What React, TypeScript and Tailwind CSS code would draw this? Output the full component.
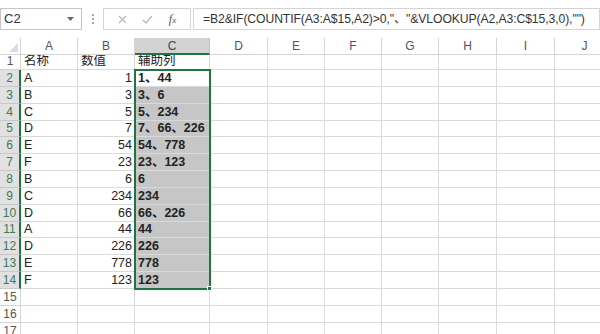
import React from 'react';

const COLS = [
  { key: 'A', w: 57 },
  { key: 'B', w: 57 },
  { key: 'C', w: 75 },
  { key: 'D', w: 58 },
  { key: 'E', w: 57 },
  { key: 'F', w: 57 },
  { key: 'G', w: 57 },
  { key: 'H', w: 58 },
  { key: 'I', w: 58 },
  { key: 'J', w: 60 },
];

type Row = { a?: string; b?: string; c?: string };

const ROWS: Row[] = [
  { a: '名称', b: '数值', c: '辅助列' },
  { a: 'A', b: '1', c: '1、44' },
  { a: 'B', b: '3', c: '3、6' },
  { a: 'C', b: '5', c: '5、234' },
  { a: 'D', b: '7', c: '7、66、226' },
  { a: 'E', b: '54', c: '54、778' },
  { a: 'F', b: '23', c: '23、123' },
  { a: 'B', b: '6', c: '6' },
  { a: 'C', b: '234', c: '234' },
  { a: 'D', b: '66', c: '66、226' },
  { a: 'A', b: '44', c: '44' },
  { a: 'D', b: '226', c: '226' },
  { a: 'E', b: '778', c: '778' },
  { a: 'F', b: '123', c: '123' },
  {},
  {},
  {},
];

const font = "font-['Liberation_Sans','Noto_Sans_CJK_SC',sans-serif]";

function Toolbar() {
  return (
    <div className="flex h-[38px] items-start bg-white pt-[8px]">
      <div className="flex h-[22px] w-[82px] items-center justify-between border border-[#c6c6c6] pl-[3px] pr-[7px]">
        <span className="text-[13px] text-[#333]">C2</span>
        <svg width="7" height="4" viewBox="0 0 7 4">
          <path d="M0 0h7L3.5 4z" fill="#666" />
        </svg>
      </div>
      <div className="flex h-[22px] w-[21px] flex-col items-center justify-center gap-[2px]">
        <span className="h-[2px] w-[2px] bg-[#aaa]" />
        <span className="h-[2px] w-[2px] bg-[#aaa]" />
        <span className="h-[2px] w-[2px] bg-[#aaa]" />
      </div>
      <div className="flex h-[22px] w-[88px] items-center justify-around border border-[#d4d4d4] px-[6px]">
        <svg width="9" height="9" viewBox="0 0 9 9">
          <path d="M1 1l7 7M8 1L1 8" stroke="#b8b8b8" strokeWidth="1.2" />
        </svg>
        <svg width="11" height="9" viewBox="0 0 11 9">
          <path d="M1 5l3 3 6-7" stroke="#b8b8b8" strokeWidth="1.3" fill="none" />
        </svg>
        <span className="font-['Liberation_Serif',serif] text-[12px] italic text-[#555]">
          f<span className="text-[9px]">x</span>
        </span>
      </div>
      <div className="ml-[2px] flex h-[22px] flex-1 items-center border border-[#d4d4d4] pl-[9px]">
        <span className="whitespace-nowrap text-[12.2px] tracking-[-0.1px] text-[#333]">
          =B2&amp;IF(COUNTIF(A3:A$15,A2)&gt;0,"、"&amp;VLOOKUP(A2,A3:C$15,3,0),"")
        </span>
      </div>
    </div>
  );
}

function ColumnHeaders() {
  return (
    <div className="flex h-[17px]">
      <div className="relative w-[21px] shrink-0 border-r border-b border-[#d4d4d4] bg-white">
        <svg className="absolute bottom-[2px] right-[2px]" width="9" height="9" viewBox="0 0 9 9">
          <path d="M9 0v9H0z" fill="#dcdcdc" />
        </svg>
      </div>
      {COLS.map((c) => (
        <div
          key={c.key}
          style={{ width: c.w }}
          className={`flex shrink-0 items-center justify-center border-r text-[12px] ${
            c.key === 'C'
              ? 'border-b-2 border-r-[#c0c0c0] border-b-[#217346] bg-[#d3d3d3] text-[#444]'
              : 'border-b border-[#d4d4d4] bg-white text-[#555]'
          }`}
        >
          {c.key}
        </div>
      ))}
    </div>
  );
}

function SheetRow({ row, index }: { row: Row; index: number }) {
  const n = index + 1;
  const inSel = n >= 2 && n <= 14;
  const h = n === 1 ? 'h-[15px]' : 'h-[16.85px]';
  return (
    <div className={`flex ${h}`}>
      <div
        className={`flex w-[21px] shrink-0 items-end justify-center border-b text-[12px] leading-[15px] ${
          inSel
            ? 'border-r-2 border-r-[#217346] border-b-[#c8c8c8] bg-[#e1e1e1] text-[#3d7a55]'
            : 'border-r border-[#d4d4d4] bg-white text-[#555]'
        }`}
      >
        {n}
      </div>
      {COLS.map((c) => {
        let text = '';
        let align = 'justify-start pl-[3px]';
        let extra = '';
        if (c.key === 'A') text = row.a ?? '';
        if (c.key === 'B') {
          text = row.b ?? '';
          if (n > 1) align = 'justify-end pr-[2px]';
        }
        if (c.key === 'C') {
          text = row.c ?? '';
          if (n > 1) extra = 'font-bold';
          if (n >= 3 && n <= 14) extra += ' bg-[#c6c6c6]';
        }
        return (
          <div
            key={c.key}
            style={{ width: c.w }}
            className={`flex shrink-0 items-end overflow-hidden whitespace-nowrap border-r border-b border-[#dadada] text-[12.5px] leading-[15px] text-[#222] ${align} ${extra}`}
          >
            {text}
          </div>
        );
      })}
    </div>
  );
}

export default function App() {
  return (
    <div className={`h-[334px] w-[600px] overflow-hidden bg-white ${font}`}>
      <Toolbar />
      <div className="relative">
        <ColumnHeaders />
        {ROWS.map((r, i) => (
          <SheetRow key={i} row={r} index={i} />
        ))}
        {/* selection C2:C14 */}
        <div className="pointer-events-none absolute left-[134px] top-[31px] h-[220.5px] w-[77px] border-2 border-[#217346]" />
        <div className="pointer-events-none absolute left-[207px] top-[248px] h-[5px] w-[5px] border border-white bg-[#217346]" />
      </div>
    </div>
  );
}
